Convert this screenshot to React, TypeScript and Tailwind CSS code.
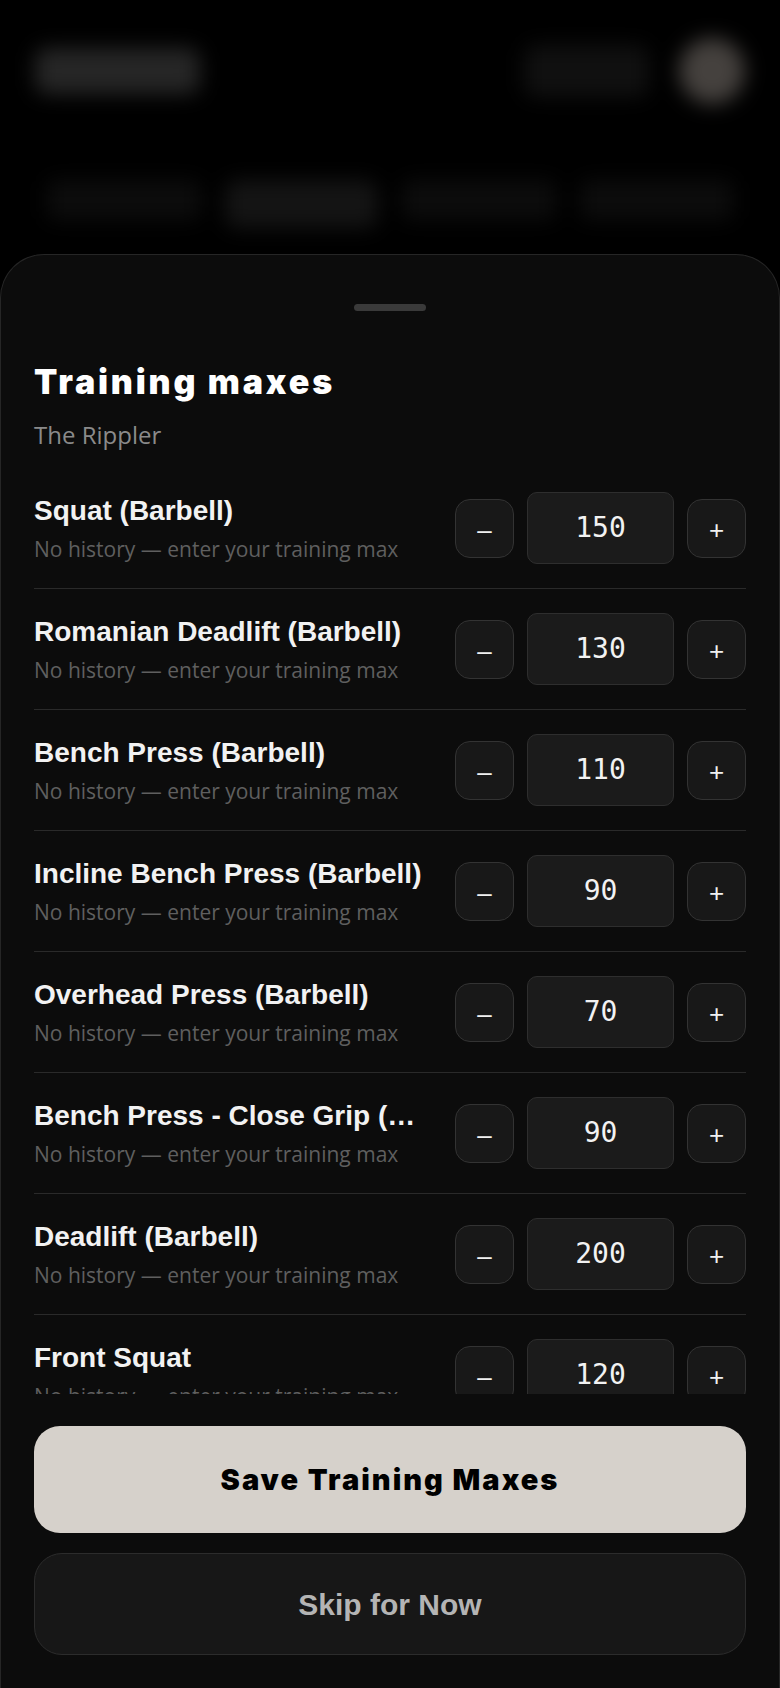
import {useState} from 'react'

const HEAVY = "font-['Inter','Liberation_Sans',sans-serif] font-black"
const BOLD = "font-['Liberation_Sans',Arial,sans-serif] font-bold"
const UI = "font-['Open_Sans','Noto_Sans',sans-serif]"
const MONO = "font-['DejaVu_Sans_Mono','Liberation_Mono',monospace]"

const INITIAL = [
  {name: 'Squat (Barbell)', value: 150},
  {name: 'Romanian Deadlift (Barbell)', value: 130},
  {name: 'Bench Press (Barbell)', value: 110},
  {name: 'Incline Bench Press (Barbell)', value: 90},
  {name: 'Overhead Press (Barbell)', value: 70},
  {name: 'Bench Press - Close Grip (Barbell)', value: 90},
  {name: 'Deadlift (Barbell)', value: 200},
  {name: 'Front Squat', value: 120},
]

function MaxRow({name, value, onChange}: {name: string; value: number; onChange: (v: number) => void}) {
  return (
    <div className="flex items-center gap-6 border-b border-[#2a2a2a] py-6">
      <div className="min-w-0 flex-1">
        <div className={`${BOLD} truncate text-[28px] leading-[34px] text-[#f2f2f2]`}>{name}</div>
        <div className={`${UI} mt-[7px] truncate text-[21px] leading-[28px] text-[#5f5f5f]`}>
          No history — enter your training max
        </div>
      </div>
      <div className="flex shrink-0 items-center gap-[13px]">
        <button
          onClick={() => onChange(Math.max(0, value - 5))}
          className={`${BOLD} flex size-[59px] items-center justify-center rounded-[15px] border border-[#333] bg-[#181818] pt-1 text-[26px] font-normal text-[#f0f0f0]`}
        >
          –
        </button>
        <div
          className={`${MONO} flex h-[72px] w-[147px] items-center justify-center rounded-[10px] border border-[#2e2e2e] bg-[#1b1b1b] text-[28px] text-[#f2f2f2]`}
        >
          {value}
        </div>
        <button
          onClick={() => onChange(value + 5)}
          className={`${BOLD} flex size-[59px] items-center justify-center rounded-[15px] border border-[#333] bg-[#181818] pt-1 text-[26px] font-normal text-[#f0f0f0]`}
        >
          +
        </button>
      </div>
    </div>
  )
}

export default function App() {
  const [rows, setRows] = useState(INITIAL)

  const update = (index: number, value: number) => {
    setRows(prev => prev.map((r, i) => (i === index ? {...r, value} : r)))
  }

  return (
    <div className="flex h-screen flex-col overflow-hidden bg-black">
      {/* ぼかした背景ページ */}
      <header className="h-[254px] shrink-0 px-[35px] pt-[38px] blur-[10px]">
        <div className="flex items-center justify-between">
          <div className="h-[46px] w-[165px] rounded-xl bg-[#262626]" />
          <div className="flex items-center gap-[30px]">
            <div className="h-[52px] w-[125px] rounded-xl bg-[#101010]" />
            <div className="size-[66px] rounded-full bg-[#45413e]" />
          </div>
        </div>
        <div className="mt-[76px] grid grid-cols-4 gap-6 px-3">
          <div className="h-[40px] rounded-lg bg-[#0c0c0c]" />
          <div className="h-[48px] rounded-xl bg-[#141414]" />
          <div className="h-[40px] rounded-lg bg-[#0c0c0c]" />
          <div className="h-[40px] rounded-lg bg-[#0c0c0c]" />
        </div>
      </header>

      {/* シート */}
      <div className="flex min-h-0 flex-1 flex-col rounded-t-[44px] border-x border-t border-[#262626] bg-[#0c0c0c]">
        <div className="pt-[49px]">
          <div className="mx-auto h-[7px] w-[72px] rounded-full bg-[#3a3a3a]" />
        </div>

        <div className="px-[33px]">
          <h1 className={`${HEAVY} mt-[51px] text-[34px] leading-[40px] tracking-[2.8px] text-white`}>Training maxes</h1>
          <p className={`${UI} mt-[17px] text-[24px] leading-[32px] text-[#8a8a8a]`}>The Rippler</p>
        </div>

        <div className="mt-[17px] min-h-0 flex-1 overflow-hidden px-[33px]">
          {rows.map((r, i) => (
            <MaxRow key={r.name} name={r.name} value={r.value} onChange={v => update(i, v)} />
          ))}
        </div>

        <div className="flex shrink-0 flex-col gap-5 px-[33px] pb-[33px] pt-8">
          <button className={`${HEAVY} h-[107px] rounded-[26px] bg-[#d6d1cb] text-[29px] tracking-[2px] text-black`}>
            Save Training Maxes
          </button>
          <button className={`${BOLD} h-[102px] rounded-[28px] border border-[#2c2c2c] bg-[#171717] text-[30px] text-[#b4b4b4]`}>
            Skip for Now
          </button>
        </div>
      </div>
    </div>
  )
}
